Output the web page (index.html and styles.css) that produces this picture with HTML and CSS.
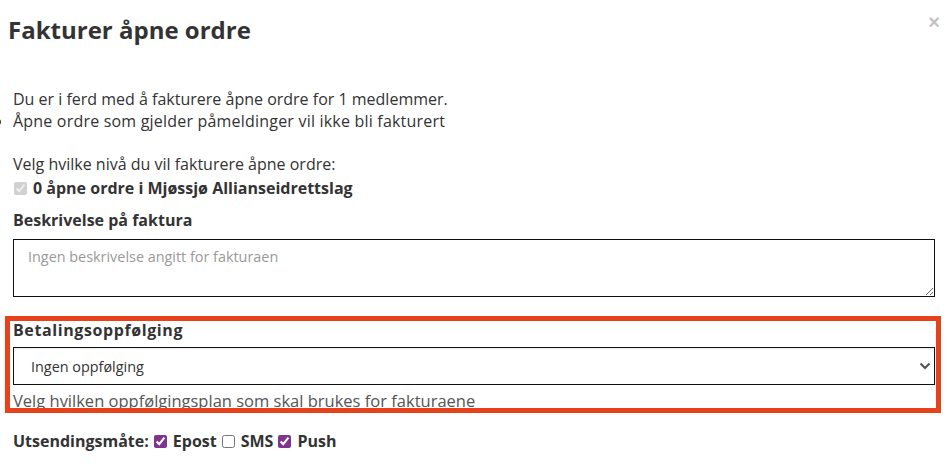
FILE: index.html
```html
<!DOCTYPE html>
<html lang="no">
<head>
  <meta charset="UTF-8">
  <title>Fakturer åpne ordre</title>
  <link rel="stylesheet" href="styles.css">
</head>
<body>

  <div class="modal-header">
    <h4 class="modal-title">Fakturer åpne ordre</h4>
    <button class="lukk" type="button">&times;</button>
  </div>

  <div class="modal-body">
    <div class="intro">
      Du er i ferd med å fakturere åpne ordre for 1 medlemmer.
      <ul>
        <li>Åpne ordre som gjelder påmeldinger vil ikke bli fakturert</li>
      </ul>
    </div>

    <div class="nivaa">Velg hvilke nivå du vil fakturere åpne ordre:</div>
    <label class="nivaa-valg">
      <input type="checkbox" checked disabled>
      <span>0 åpne ordre i Mjøssjø Allianseidrettslag</span>
    </label>

    <div class="felt-tittel">Beskrivelse på faktura</div>
    <textarea class="beskrivelse" placeholder="Ingen beskrivelse angitt for fakturaen"></textarea>

    <div class="oppfolging">
      <div class="felt-tittel tett">Betalingsoppfølging</div>
      <div class="velger">
        <select>
          <option>Ingen oppfølging</option>
        </select>
        <svg class="pil" width="12" height="8" viewBox="0 0 12 8">
          <path d="M1.5 1.5 L6 6 L10.5 1.5" fill="none" stroke="#555" stroke-width="2.2"/>
        </svg>
      </div>
      <div class="hjelp">Velg hvilken oppfølgingsplan som skal brukes for fakturaene</div>
    </div>

    <div class="utsending">
      <span>Utsendingsmåte:</span>
      <input type="checkbox" checked> <span>Epost</span>
      <input type="checkbox"> <span>SMS</span>
      <input type="checkbox" checked> <span>Push</span>
    </div>
  </div>

</body>
</html>
```

FILE: styles.css
```css
body {
  margin: 0;
  font-family: "Open Sans", Lato, Arial, sans-serif;
  font-size: 16px;
  color: #333;
  background: #fff;
  overflow: hidden;
}
.modal-header {
  display: flex;
  justify-content: space-between;
  align-items: flex-start;
  padding: 15px 10px 15px 8px;
}
.modal-title {
  margin: 0;
  font-size: 24px;
  line-height: 30px;
  font-weight: bold;
}
.lukk {
  border: none;
  background: none;
  padding: 0;
  font-size: 20px;
  line-height: 8px;
  color: #c4c4c4;
  font-family: Arial, sans-serif;
  font-weight: bold;
  margin-top: 3px;
}
.modal-body {
  padding: 28px 15px 0 13px;
}
.intro {
  line-height: 22px;
}
.intro ul {
  margin: 0;
  padding-left: 0;
}
.intro li {
  list-style-position: outside;
  margin-left: 0;
  letter-spacing: 0.2px;
}
.nivaa {
  margin-top: 21px;
  line-height: 22px;
}
.nivaa-valg {
  display: flex;
  align-items: center;
  margin-top: 2px;
  line-height: 22px;
  font-weight: bold;
}
.nivaa-valg input {
  margin: 0 6px 0 1px;
  width: 13px;
  height: 13px;
}
.felt-tittel {
  margin-top: 10px;
  line-height: 22px;
  font-weight: bold;
}
.felt-tittel.tett {
  margin-top: 0;
  line-height: 18px;
  letter-spacing: 0.6px;
}
.beskrivelse {
  display: block;
  box-sizing: border-box;
  width: 100%;
  height: 58px;
  margin-top: 8px;
  padding: 7px 14px;
  border: 1px solid #111;
  border-radius: 0;
  font-family: inherit;
  font-size: 14.4px;
  color: #333;
  resize: vertical;
}
.beskrivelse::placeholder {
  color: #999;
}
.oppfolging {
  box-sizing: border-box;
  height: 97px;
  margin: 19px -6px 0 -8px;
  padding: 0 1px 0 3px;
  border: 5px solid #e8421c;
  overflow: hidden;
}
.velger {
  position: relative;
  margin-top: 8px;
}
.velger select {
  display: block;
  width: 100%;
  height: 38px;
  padding: 0 17px;
  border: 1px solid #111;
  border-radius: 0;
  box-shadow: inset 0 1px 1px rgba(0, 0, 0, 0.08);
  background: #fff;
  font-family: inherit;
  font-size: 14.4px;
  color: #333;
  appearance: none;
  -webkit-appearance: none;
}
.pil {
  position: absolute;
  right: 4px;
  top: 15px;
}
.hjelp {
  margin-top: 7px;
  line-height: 18px;
  font-size: 16.5px;
  color: #555;
}
.utsending {
  display: flex;
  align-items: center;
  margin-top: 17px;
  line-height: 22px;
  font-weight: bold;
}
.utsending input {
  margin: 0 6px 0 5px;
  width: 13px;
  height: 13px;
  accent-color: #7d3590;
}
```
